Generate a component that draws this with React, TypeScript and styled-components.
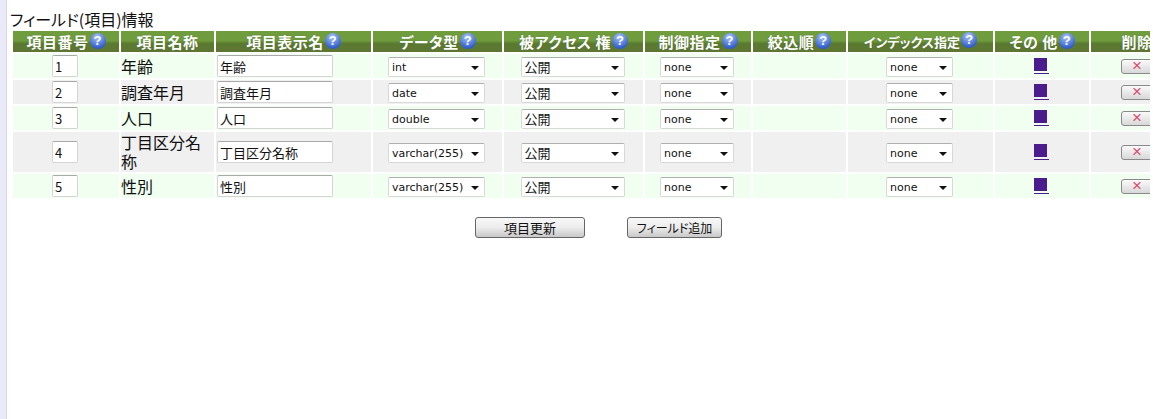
import * as React from 'react'
import styled, { createGlobalStyle } from 'styled-components'

const GlobalStyle = createGlobalStyle`
  html, body {
    margin: 0;
    padding: 0;
    background: #fff;
    overflow: hidden;
  }
`

const Page = styled.div`
  width: 1150px;
  height: 419px;
  box-sizing: border-box;
  overflow: hidden;
  border-left: 6px solid #e9e9f8;
  box-shadow: inset 1px 0 0 #d6d6f0;
  padding: 10px 0 0 4px;
  font-family: 'Noto Sans CJK JP', 'Liberation Sans', sans-serif;
  font-feature-settings: 'palt';
  color: #111;
`

const Heading = styled.div`
  font-size: 16px;
  line-height: 18px;
  height: 18px;
`

const Table = styled.table`
  border-collapse: separate;
  border-spacing: 2px;
  table-layout: fixed;
  width: 1174px;
  margin: 1px 0 0 1px;
`

const HeadCell = styled.th<{ $small?: boolean }>`
  height: 21px;
  padding: 0;
  text-align: center;
  font-size: ${(p) => (p.$small ? 13 : 15)}px;
  letter-spacing: ${(p) => (p.$small ? 0 : 0.5)}px;
  line-height: 20px;
  font-weight: bold;
  color: #fff;
  text-shadow: 0 0 1px #46602a;
  white-space: nowrap;
  overflow: hidden;
  background: linear-gradient(#6f9c3c 0%, #6f9c3c 45%, #5a7a30 60%, #5f7633 100%);
`

const HelpBadge = styled.span`
  display: inline-block;
  width: 16px;
  height: 16px;
  line-height: 16px;
  border-radius: 50%;
  margin-left: 1px;
  vertical-align: 3px;
  font-family: 'Liberation Sans', sans-serif;
  font-size: 13px;
  letter-spacing: 0;
  text-shadow: none;
  color: #fff;
  background: radial-gradient(circle at 45% 25%, #a8c4f4, #2f5ccc 75%);
`

const Row = styled.tr<{ $odd: boolean }>`
  background: ${(p) => (p.$odd ? '#f0fff0' : '#f0f0f0')};
`

const NameCell = styled.td`
  padding: 1px 1px 1px 0;
  font-size: 16px;
  line-height: 19px;
  vertical-align: middle;
`

const ControlCell = styled.td<{ $center?: boolean }>`
  padding: ${(p) => (p.$center ? '1px 3px 1px 1px' : '1px')};
  line-height: 0;
  text-align: ${(p) => (p.$center ? 'center' : 'left')};
  vertical-align: middle;
`

const TextBox = styled.input<{ $w: number }>`
  box-sizing: border-box;
  display: inline-block;
  width: ${(p) => p.$w}px;
  height: 22px;
  padding: 0 1px 0 2px;
  vertical-align: middle;
  border: 1px solid #d4d4d4;
  border-top-color: #a8a8a8;
  border-radius: 2px;
  background: #fff;
  color: #111;
  font-family: inherit;
  font-feature-settings: inherit;
  font-size: 13px;
`

const Select = styled.div<{ $w: number; $kanji?: boolean }>`
  box-sizing: border-box;
  display: inline-flex;
  align-items: center;
  justify-content: space-between;
  width: ${(p) => p.$w}px;
  height: 20px;
  margin-top: 2px;
  padding: 1px 4px 0 3px;
  vertical-align: middle;
  border: 1px solid #d8d8d8;
  border-top-color: #b0b0b0;
  border-radius: 2px;
  background: #fff;
  text-align: left;
  line-height: 18px;
  font-family: 'DejaVu Sans', 'Noto Sans CJK JP', sans-serif;
  font-size: ${(p) => (p.$kanji ? 13 : 11)}px;
`

const Arrow = styled.span`
  width: 0;
  height: 0;
  margin-right: 1px;
  border-left: 4px solid transparent;
  border-right: 4px solid transparent;
  border-top: 4px solid #111;
`

const OtherLink = styled.a`
  display: inline-block;
  width: 15px;
  padding: 0 0 2px;
  border-bottom: 1px solid #4b1c8c;
  line-height: 0;
  vertical-align: middle;
`

const OtherMark = styled.span`
  display: block;
  width: 13px;
  height: 13px;
  background: #4b1c8c;
`

const DeleteButton = styled.button`
  box-sizing: border-box;
  display: block;
  width: 32px;
  height: 15px;
  margin: 0 auto;
  padding: 0;
  border: 1px solid #8a8a8a;
  border-radius: 3px;
  color: #d85070;
  font-family: 'Liberation Sans', sans-serif;
  font-size: 17px;
  line-height: 12px;
  background: linear-gradient(#fafafa, #d8d8d8);
`

const Actions = styled.div`
  display: flex;
  justify-content: center;
  gap: 42px;
  width: 1177px;
  margin-top: 17px;
`

const ActionButton = styled.button<{ $w: number; $small?: boolean }>`
  box-sizing: border-box;
  width: ${(p) => p.$w}px;
  height: 21px;
  padding: 0;
  border: 1px solid #666;
  border-radius: 3px;
  color: #111;
  font-family: inherit;
  font-feature-settings: inherit;
  font-size: ${(p) => (p.$small ? 12 : 13)}px;
  background: linear-gradient(#f8f8f8 0%, #ececec 50%, #c8c8c8 100%);
`

const columns = [
  { label: '項目番号', w: 106, help: true },
  { label: '項目名称', w: 93 },
  { label: '項目表示名', w: 155, help: true },
  { label: 'データ型', w: 129, help: true },
  { label: '被アクセス 権', w: 139, help: true },
  { label: '制御指定', w: 106, help: true },
  { label: '絞込順', w: 93, help: true },
  { label: 'インデックス指定', w: 145, help: true, small: true },
  { label: 'その 他', w: 94, help: true },
  { label: '削除', w: 92 },
]

const rows = [
  { no: 1, name: '年齢', type: 'int' },
  { no: 2, name: '調査年月', type: 'date' },
  { no: 3, name: '人口', type: 'double' },
  { no: 4, name: '丁目区分名称', type: 'varchar(255)' },
  { no: 5, name: '性別', type: 'varchar(255)' },
]

function Dropdown({ w, value, kanji }: { w: number; value: string; kanji?: boolean }) {
  return (
    <Select $w={w} $kanji={kanji}>
      {value}
      <Arrow />
    </Select>
  )
}

export default function App() {
  return (
    <Page>
      <GlobalStyle />
      <Heading>フィールド(項目)情報</Heading>
      <Table>
        <colgroup>
          {columns.map((c) => (
            <col key={c.label} width={c.w} />
          ))}
        </colgroup>
        <thead>
          <tr>
            {columns.map((c) => (
              <HeadCell key={c.label} $small={c.small}>
                {c.label}
                {c.help && <HelpBadge>?</HelpBadge>}
              </HeadCell>
            ))}
          </tr>
        </thead>
        <tbody>
          {rows.map((r, i) => (
            <Row key={r.no} $odd={i % 2 === 0}>
              <ControlCell $center>
                <TextBox $w={26} defaultValue={r.no} />
              </ControlCell>
              <NameCell>{r.name}</NameCell>
              <ControlCell>
                <TextBox $w={116} defaultValue={r.name} />
              </ControlCell>
              <ControlCell $center>
                <Dropdown w={97} value={r.type} />
              </ControlCell>
              <ControlCell $center>
                <Dropdown w={104} value="公開" kanji />
              </ControlCell>
              <ControlCell $center>
                <Dropdown w={74} value="none" />
              </ControlCell>
              <ControlCell />
              <ControlCell $center>
                <Dropdown w={67} value="none" />
              </ControlCell>
              <ControlCell $center>
                <OtherLink href="#">
                  <OtherMark />
                </OtherLink>
              </ControlCell>
              <ControlCell>
                <DeleteButton>×</DeleteButton>
              </ControlCell>
            </Row>
          ))}
        </tbody>
      </Table>
      <Actions>
        <ActionButton $w={110}>項目更新</ActionButton>
        <ActionButton $w={95} $small>
          フィールド追加
        </ActionButton>
      </Actions>
    </Page>
  )
}
